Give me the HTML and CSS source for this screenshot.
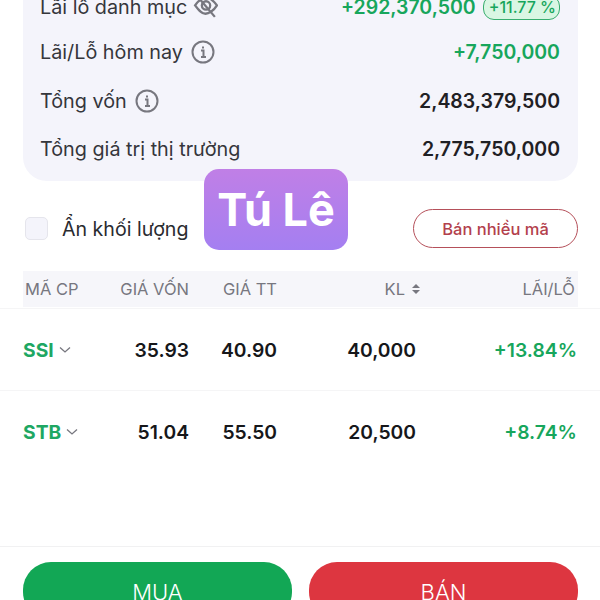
FILE: index.html
```html
<!DOCTYPE html>
<html lang="en">
<head>
    <meta charset="UTF-8">
    <title>Danh mục</title>
    <link rel="stylesheet" href="styles.css">
</head>
<body>
  <div class="screen">

    <!-- portfolio summary -->
    <section class="summary">
      <div class="summary-row first-row">
        <span class="summary-label">Lãi lỗ danh mục
          <svg class="icon-eye" viewBox="0 0 24 24" width="25" height="25">
            <path d="M2 10 C6 4 11 2 13 2 C17 3 20 6 23 10 C20 15 15 18 12 18 C8 18 5 14 2 10 Z"/>
            <circle cx="12.500" cy="10" r="4"/>
            <path d="M4 1 L21 21"/>
          </svg>
        </span>
        <span class="summary-value gain">+292,370,500
          <span class="percent-pill">+11.77 %</span>
        </span>
      </div>
      <div class="summary-row">
        <span class="summary-label">Lãi/Lỗ hôm nay
          <svg class="icon-info" viewBox="0 0 24 24" width="24" height="24">
            <circle cx="12" cy="12" r="10.500"/>
            <path d="M10 10.500 H12.500 V17 M10 17 H15"/>
            <path d="M12 6.500 V8.500"/>
          </svg>
        </span>
        <span class="summary-value gain">+7,750,000</span>
      </div>
      <div class="summary-row">
        <span class="summary-label">Tổng vốn
          <svg class="icon-info" viewBox="0 0 24 24" width="24" height="24">
            <circle cx="12" cy="12" r="10.500"/>
            <path d="M10 10.500 H12.500 V17 M10 17 H15"/>
            <path d="M12 6.500 V8.500"/>
          </svg>
        </span>
        <span class="summary-value">2,483,379,500</span>
      </div>
      <div class="summary-row">
        <span class="summary-label">Tổng giá trị thị trường</span>
        <span class="summary-value">2,775,750,000</span>
      </div>
    </section>

    <div class="toolbar">
      <label class="hide-volume">
        <span class="checkbox"></span>
        Ẩn khối lượng
      </label>
      <button class="sell-many" type="button">Bán nhiều mã</button>
    </div>

    <div class="holdings-head">
      <span class="col-code">MÃ CP</span>
      <span class="col-num">GIÁ VỐN</span>
      <span class="col-num">GIÁ TT</span>
      <span class="col-num col-sort">KL
        <svg class="icon-sort" viewBox="0 0 10 12" width="10" height="12">
          <path d="M5 1 L9 5 H1 Z M5 11 L1 7 H9 Z"/>
        </svg>
      </span>
      <span class="col-num col-last">LÃI/LỖ</span>
    </div>

    <div class="holding">
      <span class="ticker">SSI
        <svg class="icon-chevron" viewBox="0 0 12 8" width="12" height="8"><path d="M1 1.500 L6 6 L11 1.500"/></svg>
      </span>
      <span class="col-num">35.93</span>
      <span class="col-num">40.90</span>
      <span class="col-num">40,000</span>
      <span class="col-num gain">+13.84%</span>
    </div>
    <div class="holding">
      <span class="ticker">STB
        <svg class="icon-chevron" viewBox="0 0 12 8" width="12" height="8"><path d="M1 1.500 L6 6 L11 1.500"/></svg>
      </span>
      <span class="col-num">51.04</span>
      <span class="col-num">55.50</span>
      <span class="col-num">20,500</span>
      <span class="col-num gain">+8.74%</span>
    </div>

    <div class="actions">
      <button class="trade buy" type="button">MUA</button>
      <button class="trade sell" type="button">BÁN</button>
    </div>

    <!-- name tag sits on top of the page -->
    <div class="name-tag">Tú Lê</div>
  </div>
</body>
</html>
```

FILE: styles.css
```css
* {
    box-sizing: border-box;
}

body {
    margin: 0;
    background: #fff;
    font-family: Inter, "Noto Sans", sans-serif;
    color: #1f2024;
}

.screen {
    position: relative;
    width: 600px;
    height: 600px;
    overflow: hidden;
}

.gain {
    color: #17a65c;
}

/* Summary card, its top is scrolled off the screen */
.summary {
    margin: -14px 22px 0 23px;
    padding: 0 18px 7.500px 17px;
    background: #f4f4fb;
    border-radius: 0 0 24px 24px;
}

.summary-row {
    display: flex;
    align-items: center;
    justify-content: space-between;
    height: 48.500px;
}

.first-row {
    height: 42px;
}

.summary-label {
    display: flex;
    align-items: center;
    gap: 8px;
    font-size: 19.800px;
    color: #35363b;
}

.summary-value {
    display: flex;
    align-items: center;
    gap: 7px;
    font-size: 19.500px;
    font-weight: 600;
}

.percent-pill {
    padding: 0 3px 0 5px;
    height: 25px;
    line-height: 23px;
    font-size: 16px;
    font-weight: 500;
    background: #d9f6e3;
    border: 1.500px solid #38ad6e;
    border-radius: 11px;
}

.icon-eye {
    margin-left: -2px;
}

.icon-eye path,
.icon-eye circle {
    fill: none;
    stroke: #77777f;
    stroke-width: 2.200;
}

.icon-info circle,
.icon-info path {
    fill: none;
    stroke: #77777f;
    stroke-width: 2;
}

.toolbar {
    display: flex;
    align-items: center;
    justify-content: space-between;
    margin: 28px 22px 0 25px;
    height: 39px;
}

.hide-volume {
    display: flex;
    align-items: center;
    gap: 14px;
    font-size: 19.600px;
    color: #2a2b30;
}

.checkbox {
    width: 23px;
    height: 23px;
    background: #f4f4fb;
    border: 1.500px solid #e5e5ec;
    border-radius: 5px;
}

.sell-many {
    width: 165px;
    height: 39px;
    padding: 0;
    background: #fff;
    border: 1.500px solid #b5505a;
    border-radius: 20px;
    font-family: inherit;
    font-size: 16.500px;
    font-weight: 500;
    color: #b3404c;
}

.holdings-head,
.holding {
    display: grid;
    grid-template-columns: 96px 70px 88px 139px 161px;
    align-items: center;
    padding-left: 23px;
}

.holdings-head {
    margin: 23px 22px 1px 23px;
    padding-left: 2px;
    grid-template-columns: 94px 70px 88px 144px 154px;
    height: 36px;
    background: #f6f6fa;
    font-size: 16.500px;
    color: #77777f;
}

.col-num {
    text-align: right;
}

.col-sort {
    display: flex;
    align-items: center;
    justify-content: flex-end;
    gap: 6px;
}

.icon-sort path {
    fill: #77777f;
}

.holding {
    height: 82px;
    border-top: 1.500px solid #f5f5f6;
    font-size: 19.300px;
    font-weight: 600;
    color: #16171a;
}

.holding .gain {
    color: #17a65c;
}

.ticker {
    display: flex;
    align-items: center;
    gap: 5px;
    font-weight: 700;
    color: #1ea763;
}

.icon-chevron path {
    fill: none;
    stroke: #77777f;
    stroke-width: 1.300;
}

.actions {
    display: flex;
    gap: 17px;
    margin-top: 74px;
    padding: 15px 22px 0 23px;
    border-top: 1.500px solid #f1f1f2;
}

.trade {
    flex: 1;
    height: 58px;
    padding: 2px 0 0;
    border: none;
    border-radius: 28px;
    font-family: inherit;
    font-size: 22px;
    font-weight: 300;
    color: #fff;
}

.buy {
    background: #12a755;
}

.sell {
    background: #dd3640;
}

.name-tag {
    position: absolute;
    top: 169px;
    left: 204px;
    width: 144px;
    height: 81px;
    display: flex;
    align-items: center;
    justify-content: center;
    background: linear-gradient(#c07fe6, #a47ff1);
    border-radius: 15px;
    font-size: 45px;
    font-weight: 700;
    color: #fff;
}
```
